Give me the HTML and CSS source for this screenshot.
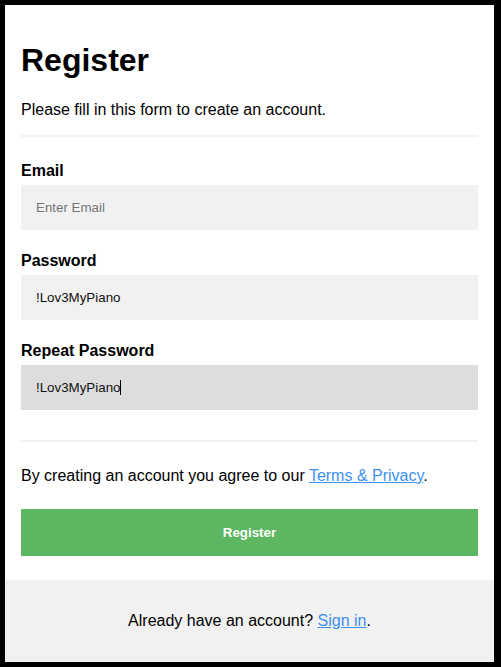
FILE: index.html
```html
<!DOCTYPE html>
<html lang="en">
<head>
<meta charset="utf-8">
<title>Register</title>
<link rel="stylesheet" href="styles.css">
</head>
<body>
<form class="form" action="#">
  <div class="container">
    <h1 class="title">Register</h1>
    <p class="text">Please fill in this form to create an account.</p>
    <hr class="rule">
    <label class="label" for="email"><b>Email</b></label>
    <span class="field-wrap">
      <input class="field" type="text" placeholder="Enter Email" name="email" id="email">
    </span>
    <label class="label" for="psw"><b>Password</b></label>
    <span class="field-wrap">
      <input class="field" type="text" name="psw" id="psw" value="!Lov3MyPiano">
    </span>
    <label class="label" for="psw-repeat"><b>Repeat Password</b></label>
    <span class="field-wrap">
      <input class="field field-focus" type="text" name="psw-repeat" id="psw-repeat" value="!Lov3MyPiano">
      <span class="caret-mirror" aria-hidden="true"><span class="ghost">!Lov3MyPiano</span><span class="caret"></span></span>
    </span>
    <hr class="rule">
    <p class="text">By creating an account you agree to our <a class="link" href="#">Terms &amp; Privacy</a>.</p>
    <button type="button" class="registerbtn">Register</button>
  </div>
  <div class="container signin">
    <p class="text">Already have an account? <a class="link" href="#">Sign in</a>.</p>
  </div>
</form>
</body>
</html>
```
FILE: styles.css
```css
* { box-sizing: border-box; }
html { background: #000; }
body {
  margin: 5px 7px 5px 5px;
  font-family: "Liberation Sans", Arial, sans-serif;
  font-size: 16px;
  color: #000;
  background: #000;
}
.form { background: #fff; height: 657px; display: flex; flex-direction: column; }
.container { padding: 16px; }
.title { font-size: 32px; margin: 21.44px 0; font-weight: bold; }
.text { margin: 16px 0; }
.rule { border: 1px solid #f1f1f1; margin: 8px 0 25px 0; }
.label b { font-weight: bold; }
.field-wrap {
  position: relative;
  display: inline-block;
  vertical-align: top;
  width: 100%;
  margin: 5px 0 22px 0;
}
.field {
  display: block;
  width: 100%;
  padding: 15px;
  margin: 0;
  border: none;
  background: #f1f1f1;
  font-family: "Liberation Sans", Arial, sans-serif;
  font-size: 13.333px;
  color: #111;
  outline: none;
}
.field::placeholder { color: #757575; }
.field-focus { background: #ddd; }
.caret-mirror {
  position: absolute;
  left: 15px;
  top: 15px;
  font-family: "Liberation Sans", Arial, sans-serif;
  font-size: 13.333px;
  line-height: 15px;
  pointer-events: none;
  display: flex;
  align-items: center;
}
.ghost { visibility: hidden; white-space: pre; }
.caret { display: block; width: 1px; height: 15px; background: #000; }
.registerbtn {
  background-color: #4CAF50;
  color: #fff;
  padding: 16px 20px;
  margin: 8px 0;
  border: none;
  width: 100%;
  opacity: 0.9;
  font-family: "Liberation Sans", Arial, sans-serif;
  font-size: 13.333px;
  font-weight: bold;
}
.link { color: #3d8ff0; }
.signin { background-color: #f1f1f1; text-align: center; margin-top: auto; }
```
